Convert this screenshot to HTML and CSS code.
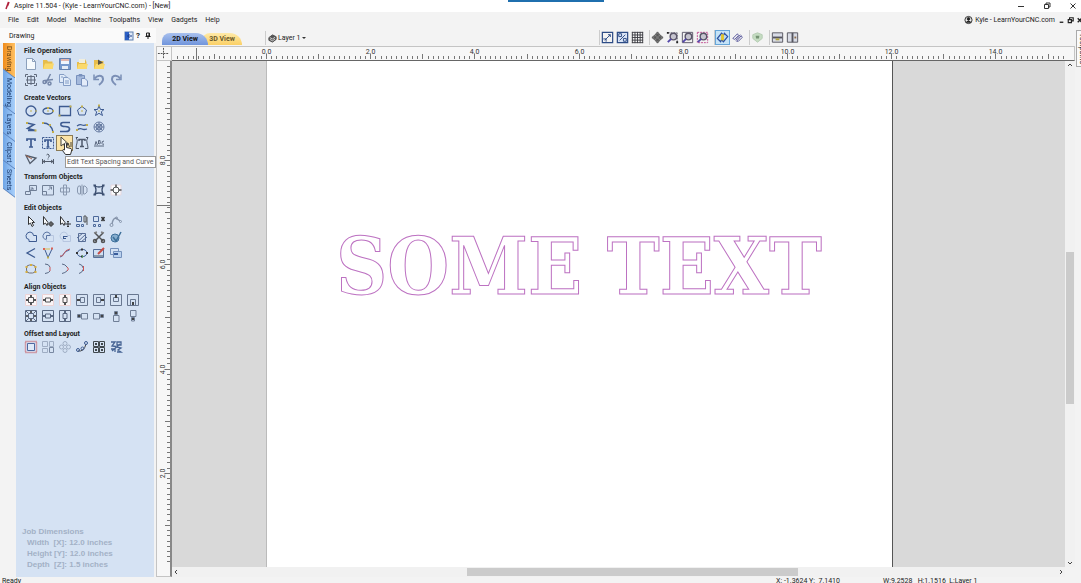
FILE: index.html
```html
<!DOCTYPE html>
<html lang="en">
<head>
<meta charset="UTF-8">
<meta name="viewport" content="width=device-width, initial-scale=1.0">
<title>Aspire 11.504</title>
<link rel="stylesheet" href="styles.css">
</head>
<body>
<header class="titlebar">
    <svg class="logo" viewBox="0 0 8 10"><path d="M5.500 1L3 8M6 1L4.500 5" stroke="#b0203c" stroke-width="1.500"/></svg>
    <span>Aspire 11.504 - (Kyle - LearnYourCNC.com) - [New]</span>
    <div class="share-bar"></div>
    <div class="window-buttons">
        <button type="button" aria-label="Minimize"><svg viewBox="0 0 8 8"><path d="M1 4.500H7"/></svg></button>
        <button type="button" aria-label="Restore"><svg viewBox="0 0 8 8"><path d="M1.500 2.500H5.500V6.500H1.500ZM3 2.500V1H7V5H5.500"/></svg></button>
        <button type="button" aria-label="Close"><svg viewBox="0 0 8 8"><path d="M1.500 1.500L6.500 6.500M6.500 1.500L1.500 6.500"/></svg></button>
    </div>
</header>

<nav class="menubar">
    <button type="button">File</button>
    <button type="button">Edit</button>
    <button type="button">Model</button>
    <button type="button">Machine</button>
    <button type="button">Toolpaths</button>
    <button type="button">View</button>
    <button type="button">Gadgets</button>
    <button type="button">Help</button>
    <div class="account">
        <svg viewBox="0 0 10 10"><circle cx="5" cy="5" r="4"/><circle cx="5" cy="3.800" r="1.500" fill="#222"/><path d="M2.500 7.500Q5 4.500 7.500 7.500Z" fill="#222"/></svg>
        <span>Kyle - LearnYourCNC.com</span>
        <svg viewBox="0 0 10 10"><path d="M3 7.500H7" stroke-width="1.500"/></svg>
        <svg viewBox="0 0 10 10"><path d="M2.500 4.500H6V8H2.500ZM4 4V2.500H8V6H6.500" stroke-width="1.300"/></svg>
        <svg viewBox="0 0 10 10"><path d="M3 3L7.500 7.500M7.500 3L3 7.500" stroke-width="1.500"/></svg>
    </div>
</nav>

<main class="main">
    <aside class="sidebar">
        <div class="panel-head">
            <span>Drawing</span>
            <svg viewBox="0 0 10 10"><rect x="1" y="1" width="8" height="8" fill="#dfe9f7" stroke="#5d7fae"/><rect x="1" y="1" width="4" height="8" fill="#2b5fc4" stroke="none"/><path d="M8 5H4M5.500 3L3.500 5L5.500 7" stroke="#173a8a"/></svg>
            <b>?</b>
            <svg viewBox="0 0 10 10"><path d="M3.500 2H6.500V5H3.500ZM2.500 5.500H7.500M5 5.500V8"/><path d="M6 2V5"/></svg>
        </div>
        <div class="panel-body">
            <div class="side-tabs">
                <div><button type="button" class="side-tab active">Drawing</button></div>
                <div><button type="button" class="side-tab">Modeling</button></div>
                <div><button type="button" class="side-tab">Layers</button></div>
                <div><button type="button" class="side-tab">Clipart</button></div>
                <div><button type="button" class="side-tab">Sheets</button></div>
            </div>
            <div class="panel">
                <section>
                    <h2>File Operations</h2>
                    <div class="tools">
                        <button type="button" title="New"><svg viewBox="0 0 16 16"><path d="M3.500 2.500H9.500L12.500 5.500V13.500H3.500Z" fill="#fafdff" stroke="#8599b5"/><path d="M9.500 2.500V5.500H12.500" stroke="#8599b5"/></svg></button>
                        <button type="button" title="Open"><svg viewBox="0 0 16 16"><path d="M3 13V4H7L8 5.500H12.500V13Z" fill="#e9b93a" stroke="none"/><path d="M3 13L5 7.500H14L12.500 13Z" fill="#ffd95e" stroke="none"/></svg></button>
                        <button type="button" title="Save"><svg viewBox="0 0 16 16"><path d="M2.500 2.500H13.500V13.500H2.500Z" fill="#6d92c9" stroke="#5776a8"/><path d="M4 3H12V8H4Z" fill="#f4f8ff" stroke="none"/><path d="M4 4H12" stroke="#d36b4e"/><path d="M5 10H11V13H5Z" fill="#e8eef8" stroke="none"/></svg></button>
                        <button type="button" title="Import"><svg viewBox="0 0 16 16"><path d="M3 13V6H5V3H11L12.500 6V13Z" fill="#e9b93a" stroke="none"/><path d="M5 3H11V7H5Z" fill="#f5f0dc" stroke="none"/><path d="M3 13L4.500 8H14L12.500 13Z" fill="#ffd95e" stroke="none"/></svg></button>
                        <button type="button" title="Import Bitmap"><svg viewBox="0 0 16 16"><path d="M3 13V4H7L8 5H12.500V13Z" fill="#e9b93a" stroke="none"/><path d="M3 13L5 8H14L12.500 13Z" fill="#ffd95e" stroke="none"/><path d="M7 3.500L12 6.500L7 9Z" fill="#4d4634" stroke="none"/></svg></button>
                    </div>
                    <div class="tools">
                        <button type="button" title="Job Setup"><svg viewBox="0 0 16 16" stroke="#555f70"><path d="M4.500 4.500H11.500V11.500H4.500ZM8 3V13M3 8H13"/><path d="M2.500 5V2.500H5M11 2.500H13.500V5M13.500 11V13.500H11M5 13.500H2.500V11"/></svg></button>
                        <button type="button" title="Cut"><svg viewBox="0 0 16 16" stroke="#6b7ea2" stroke-width="1.500"><path d="M10.500 2L6 11M13 7.500L5 8.500"/><circle cx="4.500" cy="10" r="1.500"/><circle cx="9.500" cy="11.500" r="1.500"/></svg></button>
                        <button type="button" title="Copy"><svg viewBox="0 0 16 16" stroke="#7b95c0"><path d="M2.500 2.500H7L9.500 5V10.500H2.500Z" fill="#e2ecfa"/><path d="M6.500 5.500H11L13.500 8V13.500H6.500Z" fill="#e2ecfa"/><path d="M8 9H12M8 11H12M4 5H6"/></svg></button>
                        <button type="button" title="Paste"><svg viewBox="0 0 16 16" stroke="#7089b8"><path d="M2.500 3.500H10.500V12.500H2.500Z" fill="#9fb5da"/><path d="M5 2.500H8V4H5Z" fill="#7089b8"/><path d="M7.500 6.500H11L13.500 9V14H7.500Z" fill="#e6eefa"/></svg></button>
                        <button type="button" title="Undo"><svg viewBox="0 0 16 16" stroke="#7287b0" stroke-width="2"><path d="M3.500 6.500Q8 2 11.500 5Q13.500 9 8 13"/><path d="M3 2.500V7.500H8" stroke-width="1.500"/></svg></button>
                        <button type="button" title="Redo"><svg viewBox="0 0 16 16" stroke="#7287b0" stroke-width="2"><path d="M12.500 6.500Q8 2 4.500 5Q2.500 9 8 13"/><path d="M13 2.500V7.500H8" stroke-width="1.500"/></svg></button>
                    </div>
                </section>
                <section>
                    <h2>Create Vectors</h2>
                    <div class="tools">
                        <button type="button" title="Circle"><svg viewBox="0 0 16 16"><circle cx="8" cy="8" r="5" stroke-width="1.300"/><path d="M7.500 8H8.500M12.500 8H13.500" stroke="#c0a93c" stroke-width="2"/></svg></button>
                        <button type="button" title="Ellipse"><svg viewBox="0 0 16 16"><ellipse cx="8" cy="8" rx="5" ry="3" stroke-width="1.300"/><path d="M7.500 8H8.500M7 5H9M12.500 8H14" stroke="#c0a93c" stroke-width="2"/></svg></button>
                        <button type="button" title="Rectangle"><svg viewBox="0 0 16 16"><path d="M2.500 3.500H13.500V12.500H2.500Z" stroke-width="1.300"/><path d="M12.500 3.500H14.500M1.500 12.500H3.500" stroke="#c0a93c" stroke-width="2"/></svg></button>
                        <button type="button" title="Polygon"><svg viewBox="0 0 16 16"><path d="M8 3.500L12.500 7L11 12H5L3.500 7Z"/><path d="M7.500 8H8.500M7 3.500H9" stroke="#c0a93c" stroke-width="2"/></svg></button>
                        <button type="button" title="Star"><svg viewBox="0 0 16 16"><path d="M8 3L9.500 6.500H13L10.300 8.800L11.500 12.500L8 10.300L4.500 12.500L5.700 8.800L3 6.500H6.500Z"/><path d="M7 2.500H9M7.500 8H8.500" stroke="#c0a93c" stroke-width="2"/></svg></button>
                    </div>
                    <div class="tools">
                        <button type="button" title="Polyline"><svg viewBox="0 0 16 16"><path d="M4 4L11 5.500L4.500 9.500L12.500 11.500H5" stroke-width="1.500"/><path d="M3 4H5M11.500 11.500H13.500" stroke="#c0a93c" stroke-width="2"/></svg></button>
                        <button type="button" title="Arc"><svg viewBox="0 0 16 16"><path d="M3 4Q11 4 13 13" stroke-width="1.300"/><path d="M2 4H4M9 6H11M12 13H14" stroke="#c0a93c" stroke-width="2"/></svg></button>
                        <button type="button" title="Curve"><svg viewBox="0 0 16 16"><path d="M13 3.500H6Q3.500 3.500 4 6Q4.500 7.500 8 7.500Q12.500 7.500 12.500 10Q12.500 12.500 9 12.500H3" stroke-width="1.700"/></svg></button>
                        <button type="button" title="Freehand"><svg viewBox="0 0 16 16"><path d="M3 7Q6 5 8 6T13 5.500M3 11Q6 9 8 10T13 10" stroke-width="1.300"/><path d="M12 6H14M2 11H4" stroke="#c0a93c" stroke-width="2"/></svg></button>
                        <button type="button" title="Texture"><svg viewBox="0 0 16 16" stroke="#5c7199"><circle cx="8" cy="8" r="1"/><circle cx="8" cy="8" r="3"/><circle cx="8" cy="8" r="5"/><path d="M4.500 4.500L11.500 11.500M11.500 4.500L4.500 11.500M3 8H13M8 3V13"/></svg></button>
                    </div>
                    <div class="tools">
                        <button type="button" title="Text"><svg viewBox="0 0 16 16"><path d="M4 6V4H12V6M8 4V12M6 12H10" stroke-width="1.700"/></svg></button>
                        <button type="button" title="Text in Box"><svg viewBox="0 0 16 16"><path d="M2.500 2.500H13.500V13.500H2.500Z" stroke-dasharray="2 1"/><path d="M5 7V5H11V7M8 5V12M6.500 12H9.500" stroke-width="1.700"/></svg></button>
                        <button type="button" class="selected" aria-label="Edit Text Spacing and Curve"><svg viewBox="0 0 16 16" stroke="#333"><path d="M4 2V11L6.500 9L8 12L9.500 11L8.500 8.500H11Z" fill="#fffdf0"/><path d="M9.500 12L11 8L12.500 12M14 7V12"/></svg></button>
                        <button type="button" title="Text on Box"><svg viewBox="0 0 16 16" stroke="#3f4a5c"><path d="M5 6V4.500H11V6M8 4.500V11.500M6 11.500H10" stroke-width="1.500"/><path d="M2 2.500Q4 5 3 8T2 13.500M14 2.500Q12 5 13 8T14 13.500M2 2.500H4M12 2.500H14M2 13.500H5M11 13.500H14"/></svg></button>
                        <button type="button" title="Text on Curve"><svg viewBox="0 0 16 16" stroke="#4b5870"><path d="M3 11H13M4 10L5 6.500L6.500 10M7.500 9V5.500Q10 5 9 7Q10.500 8.500 8 9M13 6Q10.500 6 11 8.500Q11.500 10 13 9"/></svg></button>
                    </div>
                    <div class="tools">
                        <button type="button" title="Bitmap Tracing"><svg viewBox="0 0 16 16" stroke="#444d5c"><path d="M3 4.500L13 7L7 12.500Z" stroke-width="1.300"/><path d="M3 4.500L9 8" stroke="#a25a3a"/></svg></button>
                        <button type="button" title="Dimension"><svg viewBox="0 0 16 16" stroke="#444d5c"><path d="M2.500 8V13M13.500 8V13M3 10.500H13M5 9L3 10.500L5 12M11 9L13 10.500L11 12" /><path d="M6.500 4Q8 2 9 4T8 6.500M8 7.500V8.500"/></svg></button>
                    </div>
                </section>
                <section>
                    <h2>Transform Objects</h2>
                    <div class="tools">
                        <button type="button" title="Move"><svg viewBox="0 0 16 16" stroke="#66758d"><path d="M6.500 3.500H13.500V8.500H6.500ZM2.500 9.500H7.500V12.500H2.500ZM5 10L10 6M7.500 6H10V8.500"/></svg></button>
                        <button type="button" title="Set Size"><svg viewBox="0 0 16 16" stroke="#66758d"><path d="M2.500 3.500H13.500V13H2.500Z"/><path d="M2.500 9.500H6.500V13M8.500 8L11 5.500M9 5H11.500V7.500"/></svg></button>
                        <button type="button" title="Rotate"><svg viewBox="0 0 16 16" stroke="#8190a8"><path d="M6.500 3H9.500V13H6.500ZM3.500 6H12.500V10H3.500Z"/></svg></button>
                        <button type="button" title="Mirror"><svg viewBox="0 0 16 16" stroke="#8190a8"><path d="M6.500 4H4.500L3.500 6V10L4.500 12H6.500ZM9.500 4H11L13 6V10L11 12H9.500ZM8 2.500V13.500"/></svg></button>
                        <button type="button" title="Distort"><svg viewBox="0 0 16 16" stroke="#2d4163"><path d="M4 4Q8 6 12 4Q10 8 12 12Q8 10 4 12Q6 8 4 4Z" stroke-width="1.300"/><path d="M2.500 3.500H5M11 3.500H13.500M2.500 12.500H5M11 12.500H13.500" stroke-width="2"/></svg></button>
                        <button type="button" title="Align Selected"><svg viewBox="0 0 16 16" stroke="#444"><path d="M3 3H13V13H3Z" fill="#fff" stroke="#e9d6dc"/><circle cx="8" cy="8" r="3"/><path d="M8 2.500V5.500M8 10.500V13.500M2.500 8H5.500M10.500 8H13.500" stroke-width="1.500"/></svg></button>
                    </div>
                </section>
                <section>
                    <h2>Edit Objects</h2>
                    <div class="tools">
                        <button type="button" title="Selection"><svg viewBox="0 0 16 16" stroke="#222"><path d="M5.500 3.500V11.500L7.500 10L9 13.500L10.500 12.500L9 9.500H11.500Z" fill="#fff"/></svg></button>
                        <button type="button" title="Node Editing"><svg viewBox="0 0 16 16" stroke="#222"><path d="M3.500 3.500V11.500L5.500 10L7 12.500L8 9.500Z" fill="#fff"/><path d="M11 8.500L13.500 11L11 13.500L8.500 11Z" fill="#555"/></svg></button>
                        <button type="button" title="Transform Mode"><svg viewBox="0 0 16 16" stroke="#222"><path d="M3.500 3.500V11.500L5.500 10L7 12.500L8 9.500Z" fill="#fff"/><path d="M11 8V14M8 11H14M10 9L11 8L12 9M10 13L11 14L12 13"/></svg></button>
                        <button type="button" title="Group"><svg viewBox="0 0 16 16" stroke="#3f5c91"><path d="M2.500 3.500H7.500V8.500H2.500ZM2.500 11.500H5.500V13.500H2.500ZM7.500 11.500H9.500V13.500H7.500Z"/><path d="M10 3H12V9H10ZM13 4V12" stroke="#444"/></svg></button>
                        <button type="button" title="Ungroup"><svg viewBox="0 0 16 16" stroke="#3f5c91"><path d="M2.500 3.500H7.500V8.500H2.500ZM2.500 11.500H4.500V13.500H2.500ZM7.500 11.500H9.500V13.500H7.500Z"/><path d="M10.500 4L13.500 8M13.500 4L10.500 8" stroke="#222" stroke-width="1.500"/></svg></button>
                        <button type="button" title="Measure"><svg viewBox="0 0 16 16" stroke="#7e8ca3"><path d="M4 11Q5 5 8 5L12 8" stroke-width="1.500"/><circle cx="3.500" cy="12" r="1.500"/><circle cx="8.500" cy="5" r="1"/><circle cx="12.500" cy="8.500" r="1"/></svg></button>
                    </div>
                    <div class="tools">
                        <button type="button" title="Weld"><svg viewBox="0 0 16 16"><path d="M6 10.500Q2.500 10 3 6.500Q4 3 7 3Q10.500 3.500 10.500 6.500H13.500V12.500H6Z"/></svg></button>
                        <button type="button" title="Subtract"><svg viewBox="0 0 16 16" stroke="#4d689a"><path d="M6.500 10.500Q2.500 10 3 6.500Q4 3 7 3Q10.500 3.500 10.500 6.500H6.500Z"/><path d="M10.500 6.500H13.500V12.500H6.500V10.500" stroke="#b4c4de"/></svg></button>
                        <button type="button" title="Overlap"><svg viewBox="0 0 16 16" stroke="#b4c4de"><path d="M6 10.500Q2.500 10 3 6.500Q4 3 7 3Q10.500 3.500 10.500 6.500H13.500V12.500H6Z"/><path d="M6 7.500H10.500M6.500 7V10M9 9.500H7" stroke="#2d4c86"/></svg></button>
                        <button type="button" title="Hatch"><svg viewBox="0 0 16 16" stroke="#4a618c"><path d="M4.500 4.500H11.500V12.500H4.500ZM3 9L9 4M4 12.500L12 5M7 13L13 8"/></svg></button>
                        <button type="button" title="Trim"><svg viewBox="0 0 16 16" stroke="#444" stroke-width="1.500"><path d="M4 4L12 12M12 4L4 12"/><circle cx="4" cy="12" r="1.500"/><circle cx="12" cy="12" r="1.500"/><path d="M3 4L6 3M13 4L10 3" stroke="#777"/></svg></button>
                        <button type="button" title="Validate"><svg viewBox="0 0 16 16" stroke="#2d6390"><circle cx="7" cy="9" r="4" fill="#7fa9cc"/><path d="M5 8L8 12L13 3" stroke-width="1.500"/></svg></button>
                    </div>
                    <div class="tools">
                        <button type="button" title="Fillet"><svg viewBox="0 0 16 16"><path d="M12 3.500L4 8L12 12.500" stroke-width="1.300"/></svg></button>
                        <button type="button" title="Extend"><svg viewBox="0 0 16 16"><path d="M5 5L8 12.500L12 4"/><path d="M3 4H5M11 3.500H13" stroke="#d54" stroke-width="2"/><path d="M5 4H10" stroke="#d8b93c"/><path d="M7 12.500H9" stroke="#c0a93c" stroke-width="2"/></svg></button>
                        <button type="button" title="Fit Curves"><svg viewBox="0 0 16 16"><path d="M3 12Q5 12 6.500 9T12.500 5" stroke="#3b5897"/><path d="M3 11Q6 12 7 8.500T13 4" stroke="#bb4a4f"/></svg></button>
                        <button type="button" title="Offset Nodes"><svg viewBox="0 0 16 16"><path d="M3 8Q5 4 8 4.500Q12 4 13 8Q12 12 8 11.500Q4 12 3 8Z"/><path d="M2 8H4M7 4.500H9M12 8H14M7 11.500H9" stroke="#222" stroke-width="2"/><path d="M8 11.500H9" stroke="#3ca03c" stroke-width="2"/></svg></button>
                        <button type="button" title="Edit Picture"><svg viewBox="0 0 16 16"><path d="M2.500 4.500H12.500V12.500H2.500Z" fill="#cfe0f4" stroke="#49628f"/><path d="M3 10H12V12H3Z" fill="#7f8fa0" stroke="none"/><path d="M7 9L13 3" stroke="#c33c33" stroke-width="2"/></svg></button>
                        <button type="button" title="Crop Bitmap"><svg viewBox="0 0 16 16" stroke="#6a88b5"><path d="M2.500 3.500H10.500V9.500H2.500Z"/><path d="M5.500 6.500H13.500V12.500H5.500Z" fill="#b8d0ee"/><path d="M6 9H10" stroke="#2a4f92" stroke-width="2"/></svg></button>
                    </div>
                    <div class="tools">
                        <button type="button" title="Close Vectors"><svg viewBox="0 0 16 16"><rect x="3.500" y="4" width="9" height="8" rx="3" stroke="#66646a"/><path d="M2.500 6H4.500M11.500 6H13.500M2.500 11H4.500M11.500 11H13.500M7 4H9" stroke="#d7a92c" stroke-width="2"/></svg></button>
                        <button type="button" title="Join Straight"><svg viewBox="0 0 16 16" stroke="#4c5c78"><path d="M5 3Q9 3 10 6M10 10Q9 12 5 12.500"/><path d="M10 6V10" stroke="#c44"/></svg></button>
                        <button type="button" title="Join Smooth"><svg viewBox="0 0 16 16" stroke="#4c5c78"><path d="M5 3Q8 3 10.500 6.500M10.500 9.500Q8 12 5 12.500"/><path d="M10 6Q13 8 10 10" stroke="#c44"/></svg></button>
                        <button type="button" title="Join Move"><svg viewBox="0 0 16 16" stroke="#4c5c78"><path d="M5 3Q8 3 9.500 7.500M9.500 8Q8 12 5 12.500"/><path d="M9.500 5V10" stroke="#c44"/></svg></button>
                    </div>
                </section>
                <section>
                    <h2>Align Objects</h2>
                    <div class="tools">
                        <button type="button" title="Center in Material"><svg viewBox="0 0 16 16" stroke="#444"><path d="M2.500 2.500H13.500V13.500H2.500Z" fill="#fff8f8" stroke="#efd2d2"/><path d="M5.500 5.500H10.500V10.500H5.500Z"/><path d="M8 3V5M8 11V13M3 8H5M11 8H13" stroke-width="2"/></svg></button>
                        <button type="button" title="Center Horizontally"><svg viewBox="0 0 16 16" stroke="#444"><path d="M2.500 2.500H13.500V13.500H2.500Z" fill="#fff8f8" stroke="#efd2d2"/><path d="M5.500 6H10.500V10H5.500Z"/><path d="M3 8H5M11 8H13" stroke-width="2"/></svg></button>
                        <button type="button" title="Center Vertically"><svg viewBox="0 0 16 16" stroke="#444"><path d="M2.500 2.500H13.500V13.500H2.500Z" fill="#fff8f8" stroke="#efd2d2"/><path d="M6 5.500H10V10.500H6Z"/><path d="M8 3V5M8 11V13" stroke-width="2"/></svg></button>
                        <button type="button" title="Align Left"><svg viewBox="0 0 16 16" stroke="#5d6c86"><path d="M2.500 2.500H13.500V13.500H2.500ZM6.500 5.500H10.500V10.500H6.500Z"/><path d="M3 8H6" stroke="#333" stroke-width="2"/></svg></button>
                        <button type="button" title="Align Right"><svg viewBox="0 0 16 16" stroke="#5d6c86"><path d="M2.500 2.500H13.500V13.500H2.500ZM5.500 5.500H9.500V10.500H5.500Z"/><path d="M10 8H13" stroke="#333" stroke-width="2"/></svg></button>
                        <button type="button" title="Align Top"><svg viewBox="0 0 16 16" stroke="#5d6c86"><path d="M2.500 2.500H13.500V13.500H2.500ZM5.500 5.500H10.500V9.500H5.500Z"/><path d="M8 3V6" stroke="#333" stroke-width="2"/></svg></button>
                        <button type="button" title="Align Bottom"><svg viewBox="0 0 16 16" stroke="#5d6c86"><path d="M2.500 2.500H13.500V13.500H2.500ZM5.500 7.500H10.500V13.500H5.500Z"/><path d="M8 10V13" stroke="#333" stroke-width="2"/></svg></button>
                    </div>
                    <div class="tools">
                        <button type="button" title="Center to Selection"><svg viewBox="0 0 16 16" stroke="#4c5b75"><path d="M2.500 2.500H13.500V13.500H2.500ZM5.500 5.500H10.500V10.500H5.500Z"/><path d="M8 3V5M8 11V13M3 8H5M11 8H13" stroke="#222" stroke-width="1.500"/><path d="M3 3L5 5M13 3L11 5M3 13L5 11M13 13L11 11"/></svg></button>
                        <button type="button" title="Center Across"><svg viewBox="0 0 16 16" stroke="#4c5b75"><path d="M2.500 2.500H13.500V13.500H2.500ZM5.500 6H10.500V10H5.500Z"/><path d="M3 8H5M11 8H13" stroke-width="2"/></svg></button>
                        <button type="button" title="Center Down"><svg viewBox="0 0 16 16" stroke="#4c5b75"><path d="M2.500 2.500H13.500V13.500H2.500ZM6 5.500H10V10.500H6Z"/><path d="M8 3V5M8 11V13" stroke-width="2"/></svg></button>
                        <button type="button" title="Outside Left"><svg viewBox="0 0 16 16" stroke="#66758d"><path d="M7.500 5.500H13.500V11H7.500ZM3.500 6.500H6.500V9.500H3.500Z"/><path d="M4 8H6" stroke="#333" stroke-width="2"/></svg></button>
                        <button type="button" title="Outside Right"><svg viewBox="0 0 16 16" stroke="#66758d"><path d="M2.500 5.500H8.500V11H2.500ZM9.500 6.500H12.500V9.500H9.500Z"/><path d="M10 8H12" stroke="#333" stroke-width="2"/></svg></button>
                        <button type="button" title="Outside Top"><svg viewBox="0 0 16 16" stroke="#66758d"><path d="M5.500 7.500H11V13.500H5.500ZM6.500 3.500H9.500V6.500H6.500Z"/><path d="M8 4V6" stroke="#333" stroke-width="2"/></svg></button>
                        <button type="button" title="Outside Bottom"><svg viewBox="0 0 16 16" stroke="#66758d"><path d="M5.500 2.500H11V8.500H5.500ZM6.500 9.500H9.500V13H6.500Z"/><path d="M8 10V12" stroke="#333" stroke-width="2"/></svg></button>
                    </div>
                </section>
                <section>
                    <h2>Offset and Layout</h2>
                    <div class="tools">
                        <button type="button" title="Offset"><svg viewBox="0 0 16 16"><path d="M2.500 2.500H13.500V13.500H2.500Z" stroke="#c54a52" stroke-width="1.500" stroke-dasharray="1 1"/><path d="M4.500 4.500H11.500V11.500H4.500Z" stroke="#3e5c9a" fill="#e2ebfa"/></svg></button>
                        <button type="button" title="Array Copy"><svg viewBox="0 0 16 16" stroke="#9aa8be"><path d="M2.500 2.500H7.500V7.500H2.500ZM9.500 2.500H13.500V7.500H9.500ZM2.500 9.500H7.500V13.500H2.500Z"/><path d="M9.500 8.500H13.500V13.500H9.500Z" stroke="#6f7f99"/></svg></button>
                        <button type="button" title="Circular Copy"><svg viewBox="0 0 16 16" stroke="#9aa8be"><circle cx="8" cy="4.500" r="2"/><circle cx="8" cy="11.500" r="2"/><circle cx="4.500" cy="8" r="2"/><circle cx="11.500" cy="8" r="2"/></svg></button>
                        <button type="button" title="Copy Along Vectors"><svg viewBox="0 0 16 16"><path d="M4 12Q10 13 12 5" stroke="#333"/><circle cx="4" cy="11" r="1.500"/><circle cx="8.500" cy="9.500" r="1.500"/><circle cx="12" cy="4" r="1.500"/></svg></button>
                        <button type="button" title="Nesting"><svg viewBox="0 0 16 16" stroke="#30383c"><path d="M2.500 2.500H7.500V7.500H2.500ZM8.500 2.500H13.500V7.500H8.500ZM2.500 8.500H7.500V13.500H2.500ZM8.500 8.500H13.500V13.500H8.500Z"/><path d="M4 5H6M10 5H12M4 11H6M10 11H12" stroke-width="2"/></svg></button>
                        <button type="button" title="True Shape Nesting"><svg viewBox="0 0 16 16" stroke="#38578a" stroke-width="1.300"><path d="M3 3H7L4 7L8 7.500M9 3H13V6H9ZM3 10H7V13M9 8L13 9L10 11L13 13H9M4 12L12 5"/></svg></button>
                    </div>
                </section>
                <div class="job">
                    <p>Job Dimensions</p>
                    <ul>
                        <li>Width  [X]: 12.0 inches</li>
                        <li>Height [Y]: 12.0 inches</li>
                        <li>Depth  [Z]: 1.5 inches</li>
                    </ul>
                </div>
                <div class="tooltip">Edit Text Spacing and Curve</div>
                <svg class="hand" viewBox="0 0 12 16"><path d="M3.500 9V2.500Q4.500 1 5.500 2.500V6.500L10 7.500Q11 8 10.500 10L9.500 13.500H4.500L1.500 9.500Q1.500 8 3.500 9Z" fill="#fff" stroke="#333"/></svg>
            </div>
        </div>
    </aside>

    <div class="workspace">
        <div class="viewbar">
            <button type="button" class="view-tab blue">2D View</button>
            <button type="button" class="view-tab yellow">3D View</button>
            <button type="button" class="layer">
                <svg viewBox="0 0 10 10"><path d="M1 4L5 1L9 3V6L5 9L1 7Z" fill="#555" stroke="#444"/><path d="M2 4L5 5.500L8 3.500M2 6L5 7.500L8 5.500" stroke="#ddd"/></svg>
                Layer 1
                <i></i>
            </button>
            <div class="view-tools">
                <div class="group">
                    <button type="button" title="Zoom to Job"><svg viewBox="0 0 16 16"><path d="M2.500 2.500H13.500V13.500H2.500Z" stroke-width="1.300"/><path d="M5 11L11 5M8.500 5H11V7.500M3.500 9.500H6.500V12.500"/></svg></button>
                    <button type="button" title="Zoom All"><svg viewBox="0 0 16 16"><path d="M2.500 2.500H13.500V13.500H2.500Z" stroke-width="1.300" fill="#dbe5f6"/><path d="M5 11L11 5M4 4H7V7H4ZM9 9H12V12H9Z"/></svg></button>
                    <button type="button" title="Grid"><svg viewBox="0 0 16 16" stroke="#3f3f45"><path d="M2.500 2V14M5.300 2V14M8 2V14M10.800 2V14M13.500 2V14M2 2.500H14M2 5.300H14M2 8H14M2 10.800H14M2 13.500H14"/></svg></button>
                </div>
                <div class="group">
                    <button type="button" title="Pan"><svg viewBox="0 0 16 16" stroke="#555"><path d="M8 3V13M3 8H13"/><path d="M8 2L10.500 5H5.500ZM8 14L10.500 11H5.500ZM2 8L5 5.500V10.500ZM14 8L11 5.500V10.500ZM6 6H10V10H6Z" fill="#777"/></svg></button>
                    <button type="button" title="Zoom Box"><svg viewBox="0 0 16 16" stroke="#595568"><path d="M3 3H13V13" stroke-dasharray="2 1"/><circle cx="9" cy="7" r="3.500" fill="#c6c4cf" stroke-width="1.500"/><path d="M6.500 9.500L3 13" stroke="#5346a8" stroke-width="2"/><path d="M2 3H4M12 13H14" stroke="#222" stroke-width="2"/></svg></button>
                    <button type="button" title="Zoom Drawing"><svg viewBox="0 0 16 16" stroke="#595568"><path d="M2.500 2.500H13.500V13.500H2.500Z"/><circle cx="9" cy="7" r="3.500" fill="#c6c4cf" stroke-width="1.500"/><path d="M6.500 9.500L3 13" stroke="#5346a8" stroke-width="2"/></svg></button>
                    <button type="button" title="Zoom Selected"><svg viewBox="0 0 16 16" stroke="#595568"><path d="M2.500 2.500H13.500V13.500H2.500Z" stroke="#c04a90" stroke-dasharray="2 1"/><circle cx="9" cy="7" r="3.500" fill="#c6c4cf" stroke-width="1.500"/><path d="M6.500 9.500L3 13" stroke="#5346a8" stroke-width="2"/></svg></button>
                </div>
                <div class="group">
                    <button type="button" class="on" title="Snap"><svg viewBox="0 0 16 16"><path d="M2.500 9L7 3.500L9 5.500L10 3.500L13.500 7L9 12.500L7 10.500L6 12.500Z" stroke="#2c4fa0" stroke-width="1.300" fill="#b9dcf3"/><path d="M8 4.500V11" stroke="#e3c52a" stroke-width="3"/></svg></button>
                    <button type="button" title="Smart Snap"><svg viewBox="0 0 16 16" stroke="#55549a"><path d="M3 9L8 4L9 6L5 10ZM7 12L12 6L13 8L9 12ZM6 11L11 5"/></svg></button>
                </div>
                <div class="group">
                    <button type="button" title="Shading"><svg viewBox="0 0 16 16"><path d="M8 3L13 5V9L8 13L3 9V5Z" fill="#c5dcc2" stroke="#b4ccb2"/><path d="M6 6H10L9.500 9H6.500Z" fill="#769474" stroke="none"/></svg></button>
                </div>
                <div class="group">
                    <button type="button" title="Tile Rows"><svg viewBox="0 0 16 16" stroke="#55555f"><path d="M2.500 3H13.500V13H2.500Z" fill="#d9dce6"/><path d="M3 8H13" stroke-width="2"/><path d="M6 10H10" stroke="#b0a43f" stroke-width="2"/></svg></button>
                    <button type="button" title="Tile Columns"><svg viewBox="0 0 16 16" stroke="#55555f"><path d="M2.500 3H13.500V13H2.500Z" fill="#d9dce6"/><path d="M8 3V13" stroke-width="2"/><path d="M10 8H12" stroke="#8d6f4d" stroke-width="2"/></svg></button>
                </div>
            </div>
        </div>
        <div class="stage">
            <div class="corner"><svg viewBox="0 0 14 14"><path d="M7 1V13M1 7H13" stroke="#444" stroke-dasharray="2 1"/></svg></div>
            <div class="ruler-x"><svg id="rulerX"></svg></div>
            <div class="ruler-y"><svg id="rulerY"></svg></div>
            <div class="canvas">
                <div class="sheet"></div>
                <div class="artwork">SOME TEXT</div>
            </div>
            <div class="scroll-y">
                <svg viewBox="0 0 8 8"><path d="M2 5L4 3L6 5"/></svg>
                <div class="thumb"></div>
                <svg viewBox="0 0 8 8"><path d="M2 3L4 5L6 3"/></svg>
            </div>
            <div class="scroll-x">
                <svg viewBox="0 0 8 8"><path d="M5 2L3 4L5 6"/></svg>
                <div class="thumb"></div>
                <svg viewBox="0 0 8 8"><path d="M3 2L5 4L3 6"/></svg>
            </div>
        </div>
    </div>
    <div class="right-strip">
        <button type="button">Toolpaths</button>
    </div>
</main>

<footer class="statusbar">
    <span>Ready</span>
    <span class="xy">X: -1.3624 Y:  7.1410</span>
    <span class="size">W:9.2528   H:1.1516  L:Layer 1</span>
</footer>

<script src="rulers.js"></script>
</body>
</html>
```
FILE: rulers.js
```js
const SVG = "http://www.w3.org/2000/svg";
const INCH = 52.1;      // pixels per inch at this zoom
const ORIGIN_X = 94;    // job origin inside the horizontal ruler
const ORIGIN_Y = 516;   // job origin inside the vertical ruler

function add(parent, tag, attrs, text) {
    const el = document.createElementNS(SVG, tag);
    for (const key in attrs) {
        el.setAttribute(key, attrs[key]);
    }
    if (text) {
        el.textContent = text;
    }
    parent.appendChild(el);
}

function drawRulers() {
    const rx = document.getElementById("rulerX");
    const ry = document.getElementById("rulerY");
    rx.innerHTML = "";
    ry.innerHTML = "";
    const width = rx.clientWidth - 10;
    const height = ry.clientHeight - 12;

    for (let i = -17; ORIGIN_X + i * INCH / 10 < width; i++) {
        const x = Math.round(ORIGIN_X + i * INCH / 10) + 0.5;
        add(rx, "line", { x1: x, x2: x, y1: i % 10 ? 9 : 7, y2: 12 });
        if (i >= 0 && i % 20 === 0) {
            add(rx, "text", { x: x, y: 7 }, (i / 10).toFixed(1));
        }
    }
    for (let i = 0; i < 200; i++) {
        const y = Math.round(ORIGIN_Y - i * INCH / 10) + 0.5;
        if (y < 1) break;
        if (y > height) continue;
        add(ry, "line", { x1: i % 10 ? 10 : 8, x2: 13, y1: y, y2: y });
        if (i % 20 === 0) {
            add(ry, "text", { transform: `translate(8 ${y}) rotate(-90)` }, (i / 10).toFixed(1));
        }
    }
    // cursor position markers
    add(rx, "line", { x1: 24.5, x2: 24.5, y1: 1, y2: 13 });
    add(ry, "line", { x1: 0, x2: 14, y1: 144.5, y2: 144.5 });
}

drawRulers();
window.addEventListener("resize", drawRulers);
```
FILE: styles.css
```css
* {
    box-sizing: border-box;
}

body {
    margin: 0;
    height: 100vh;
    display: flex;
    flex-direction: column;
    overflow: hidden;
    background-color: #f3f3f3;
    color: #222;
    font-family: Roboto, "Noto Sans", sans-serif;
    font-size: 7px;
    line-height: 10px;
}

button {
    margin: 0;
    padding: 0;
    border: none;
    background: none;
    color: inherit;
    font: inherit;
}

svg {
    display: block;
    fill: none;
}

svg:not([stroke]) {
    stroke: #2d4c86;
}

/* title and menu */
.titlebar {
    position: relative;
    display: flex;
    align-items: center;
    flex: none;
    height: 12px;
    padding-left: 3px;
    background-color: #fff;
}

.logo {
    width: 8px;
    height: 10px;
    margin-right: 3px;
}

.share-bar {
    position: absolute;
    left: 47%;
    top: 0;
    width: 96px;
    height: 2px;
    background-color: #1f6fae;
}

.window-buttons {
    display: flex;
    gap: 18px;
    margin-left: auto;
    padding-right: 4px;
}

.window-buttons svg {
    width: 8px;
    height: 8px;
    stroke: #333;
}

.menubar {
    display: flex;
    align-items: center;
    flex: none;
    gap: 8px;
    height: 16px;
    padding-left: 8px;
}

.account {
    display: flex;
    align-items: center;
    margin-left: auto;
    margin-right: -3px;
}

.account span {
    margin: 0 2px;
}

.account svg {
    width: 9px;
    height: 10px;
    stroke: #222;
}

.main {
    display: flex;
    flex: 1;
    min-height: 0;
}

/* left panel */
.sidebar {
    display: flex;
    flex-direction: column;
    width: 156px;
    flex: none;
}

.panel-head {
    display: flex;
    align-items: center;
    height: 15px;
    padding: 0 3px 0 9px;
    background-color: #fafafa;
}

.panel-head span {
    margin-right: auto;
}

.panel-head b {
    margin: 0 3px 0 2px;
    font-size: 8px;
}

.panel-head svg {
    width: 10px;
    height: 10px;
    stroke: #222;
}

.panel-body {
    display: flex;
    flex: 1;
    min-height: 0;
}

.side-tabs {
    width: 16px;
    padding-left: 3px;
}

.side-tabs div {
    position: relative;
    margin-bottom: -8px;
    filter: drop-shadow(0 1px 0 #5b83bd);
}

.side-tabs div:nth-child(1) { z-index: 5; }
.side-tabs div:nth-child(2) { z-index: 4; }
.side-tabs div:nth-child(3) { z-index: 3; }
.side-tabs div:nth-child(4) { z-index: 2; }

.side-tab {
    display: block;
    width: 12px;
    padding: 9px 0 6px;
    writing-mode: vertical-rl;
    background: linear-gradient(to right, #6fa5e6, #a9d0fb);
    color: #1d3c6e;
    clip-path: polygon(0 0, 100% 0, 100% 100%, 0 calc(100% - 9px));
}

.side-tab.active {
    padding-top: 3px;
    background: linear-gradient(to right, #f08c1c, #ffc163);
    color: #6b4413;
}

.panel {
    position: relative;
    display: flex;
    flex-direction: column;
    flex: 1;
    gap: 5px;
    margin-right: 2px;
    padding: 3px 0 7px 6px;
    background-color: #d5e2f3;
}

.panel h2 {
    margin: 0 0 0 2px;
    font-size: 7px;
    line-height: 10px;
    font-weight: 700;
}

.tools {
    display: flex;
}

.tools button {
    display: flex;
    justify-content: center;
    width: 17px;
    height: 16px;
}

.tools svg {
    width: 16px;
    height: 16px;
    opacity: 0.9;
}

.tools .selected {
    background-color: #fbe3a6;
    outline: 1px solid #8a7a55;
    outline-offset: -1px;
}

.job {
    margin-top: auto;
    color: #a3b1c6;
    font-family: "Liberation Sans", Arial, sans-serif;
    font-size: 8px;
    font-weight: 700;
    line-height: 11px;
}

.job p,
.job ul {
    margin: 0;
    padding: 0;
    list-style: none;
}

.job ul {
    padding-left: 5px;
}

.job li {
    white-space: pre;
}

.tooltip {
    position: absolute;
    left: 49px;
    top: 113px;
    z-index: 2;
    padding: 0 1px;
    border: 1px solid #999;
    background-color: #fff;
    color: #555;
    white-space: nowrap;
}

.hand {
    position: absolute;
    left: 45px;
    top: 98px;
    z-index: 3;
    width: 12px;
    height: 16px;
}

/* drawing view */
.workspace {
    display: flex;
    flex-direction: column;
    flex: 1;
    min-width: 0;
}

.viewbar {
    display: flex;
    align-items: flex-end;
    height: 18px;
    padding: 0 0 1px 6px;
    white-space: nowrap;
}

.view-tab {
    width: 46px;
    height: 12px;
    border-radius: 8px 12px 0 0;
}

.view-tab.blue {
    position: relative;
    z-index: 1;
    background: linear-gradient(#a8c0ee, #7195dc);
    color: #111;
    font-weight: 700;
}

.view-tab.yellow {
    width: 40px;
    margin-left: -6px;
    background: linear-gradient(#ffeaa8, #fbd066);
    color: #6b5a2c;
    font-weight: 700;
}

.layer {
    display: flex;
    align-items: center;
    gap: 1px;
    width: 42px;
    height: 14px;
    margin-left: 23px;
    padding-left: 2px;
    border-left: 1px solid #ccc;
}

.layer svg {
    width: 9px;
    height: 9px;
}

.layer i {
    border: 2px solid transparent;
    border-top-color: #333;
    border-bottom: none;
}

.view-tools {
    display: flex;
    margin-left: 292px;
}

.group {
    display: flex;
    padding-right: 4px;
    border-left: 1px solid #ccc;
}

.group button {
    width: 15px;
    height: 15px;
}

.group svg {
    width: 15px;
    height: 15px;
}

.group .on {
    background-color: #c5e3f7;
    outline: 1px solid #66a5d8;
    outline-offset: -1px;
}

.stage {
    display: grid;
    grid-template-columns: 16px 1fr 10px;
    grid-template-rows: 15px 1fr 10px;
    flex: 1;
    min-height: 0;
}

.corner,
.ruler-x,
.ruler-y {
    background-color: #f7f7f7;
    border: 1px solid #c4c4c4;
}

.corner svg {
    width: 13px;
    height: 13px;
}

.ruler-x {
    grid-column: 2 / 4;
    border-left: none;
    border-bottom: 1px solid #666;
}

.ruler-y {
    grid-row: 2 / 4;
    border-top: none;
    border-right: 2px solid #888;
}

.stage #rulerX,
.stage #rulerY {
    width: 100%;
    height: 100%;
    stroke: #777;
}

.stage text {
    fill: #333;
    stroke: none;
    font-size: 7px;
    text-anchor: middle;
}

.canvas {
    position: relative;
    overflow: hidden;
    background-color: #d9d9d9;
}

.sheet {
    position: absolute;
    left: 94px;
    top: 0;
    bottom: 0;
    width: 627px;
    background-color: #fff;
    border-left: 1px solid #bbb;
    border-right: 1px solid #555;
}

.artwork {
    position: absolute;
    left: 164px;
    top: 156px;
    color: transparent;
    font-family: "DejaVu Serif Condensed", "DejaVu Serif", serif;
    font-size: 79px;
    font-weight: 700;
    line-height: 100px;
    white-space: nowrap;
    -webkit-text-stroke: 1px #bd72c2;
}

.scroll-x,
.scroll-y {
    display: flex;
    align-items: center;
    justify-content: space-between;
    background-color: #f1f1f1;
}

.scroll-y {
    flex-direction: column;
}

.scroll-x svg,
.scroll-y svg {
    width: 8px;
    height: 8px;
    stroke: #444;
}

.scroll-x .thumb {
    width: 37%;
    height: 8px;
    margin-left: 28px;
    background-color: #cbcbcb;
}

.scroll-y .thumb {
    width: 8px;
    height: 30%;
    margin-top: 28px;
    background-color: #cbcbcb;
}

.right-strip {
    width: 6px;
    overflow: hidden;
}

.right-strip button {
    width: 12px;
    margin: 2px 0 0 1px;
    padding: 2px 0;
    border: 1px solid #aaa;
    background-color: #fafafa;
    writing-mode: vertical-rl;
}

.statusbar {
    display: flex;
    flex: none;
    height: 6px;
    padding-left: 2px;
    overflow: hidden;
    line-height: 9px;
    white-space: pre;
}

.statusbar .xy {
    margin-left: auto;
}

.statusbar .size {
    width: 198px;
    margin-left: 43px;
}
```
